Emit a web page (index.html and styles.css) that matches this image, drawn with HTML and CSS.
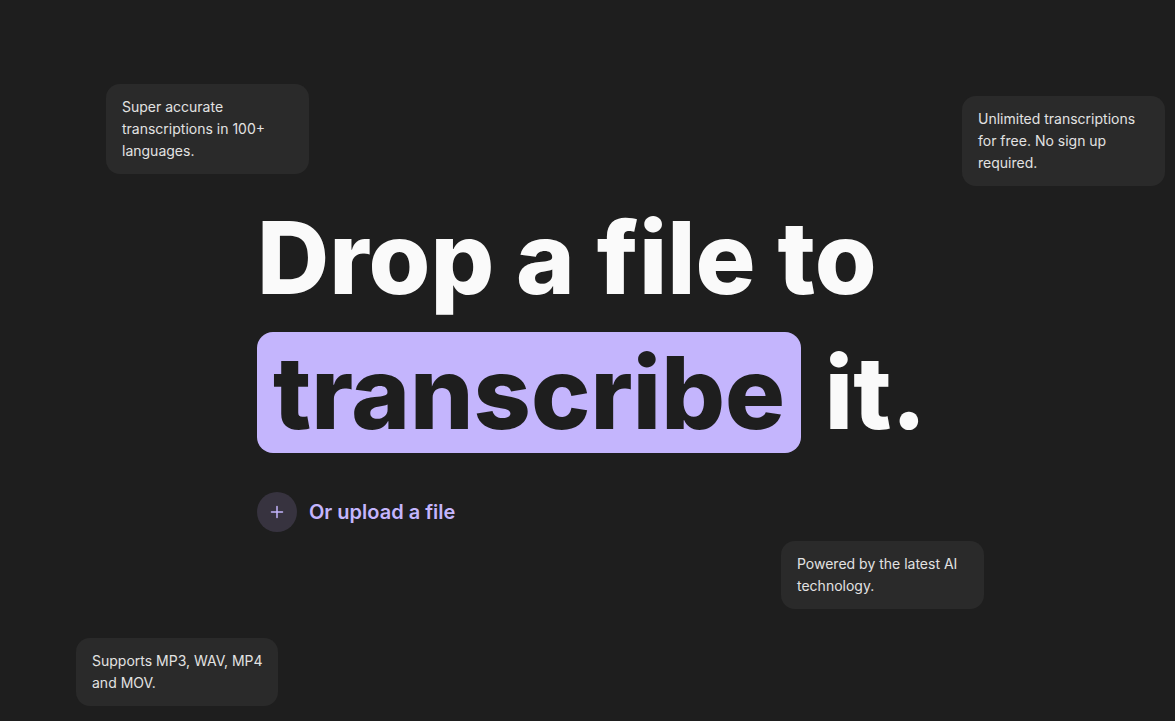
FILE: index.html
```html
<!DOCTYPE html>
<html lang="en">
<head>
<meta charset="utf-8">
<title>Drop a file to transcribe it.</title>
<link rel="stylesheet" href="styles.css">
</head>
<body>
<div class="page">
  <div class="note note-langs">Super accurate transcriptions in 100+ languages.</div>
  <div class="note note-free">Unlimited transcriptions for free. No sign up required.</div>
  <div class="note note-ai">Powered by the latest AI technology.</div>
  <div class="note note-formats">Supports MP3, WAV, MP4 and MOV.</div>

  <main class="hero">
    <h1 class="title">Drop a file to<br><span class="highlight">transcribe</span> it.</h1>
    <button class="upload" type="button">
      <span class="upload-icon">
        <svg width="14" height="14" viewBox="0 0 14 14" fill="none" stroke="currentColor" stroke-width="1.5" stroke-linecap="round"><path d="M7 1.5v11M1.5 7h11"/></svg>
      </span>
      <span class="upload-label">Or upload a file</span>
    </button>
  </main>
</div>
</body>
</html>
```

FILE: styles.css
```css
* { box-sizing: border-box; }
html, body {
  margin: 0;
  height: 100%;
  background: #1e1e1e;
}
body {
  font-family: Inter, "Noto Sans", sans-serif;
  color: #fafafa;
}
.page {
  position: relative;
  height: 100%;
  display: flex;
  align-items: center;
  justify-content: center;
  overflow: hidden;
}
.hero {
  width: 660px;
  margin-left: -1px;
  display: flex;
  flex-direction: column;
  align-items: flex-start;
}
.title {
  margin: 0;
  font-size: 100px;
  font-weight: 800;
  line-height: 135px;
  letter-spacing: 0;
  white-space: nowrap;
  color: #fafafa;
}
.highlight {
  background: #c4b5fd;
  color: #1e1e1e;
  border-radius: 16px;
  padding: 0 16px;
  margin-right: 2px;
}
.upload {
  margin-top: 32px;
  display: flex;
  align-items: center;
  gap: 12px;
  background: none;
  border: 0;
  padding: 0;
  cursor: pointer;
  font-family: inherit;
}
.upload-icon {
  width: 40px;
  height: 40px;
  border-radius: 50%;
  background: #37333f;
  color: #c4b5fd;
  display: flex;
  align-items: center;
  justify-content: center;
}
.upload-label {
  font-size: 20px;
  font-weight: 600;
  color: #c4b5fd;
}
.note {
  position: absolute;
  width: 203px;
  padding: 12px 16px;
  background: #2a2a2a;
  border-radius: 14px;
  font-size: 14px;
  line-height: 22px;
  color: #e2e2e2;
}
.note-langs { left: 106px; top: 84px; }
.note-free { left: 962px; top: 96px; }
.note-ai { left: 781px; top: 541px; }
.note-formats { left: 76px; top: 638px; width: 202px; padding-right: 8px; }
```
